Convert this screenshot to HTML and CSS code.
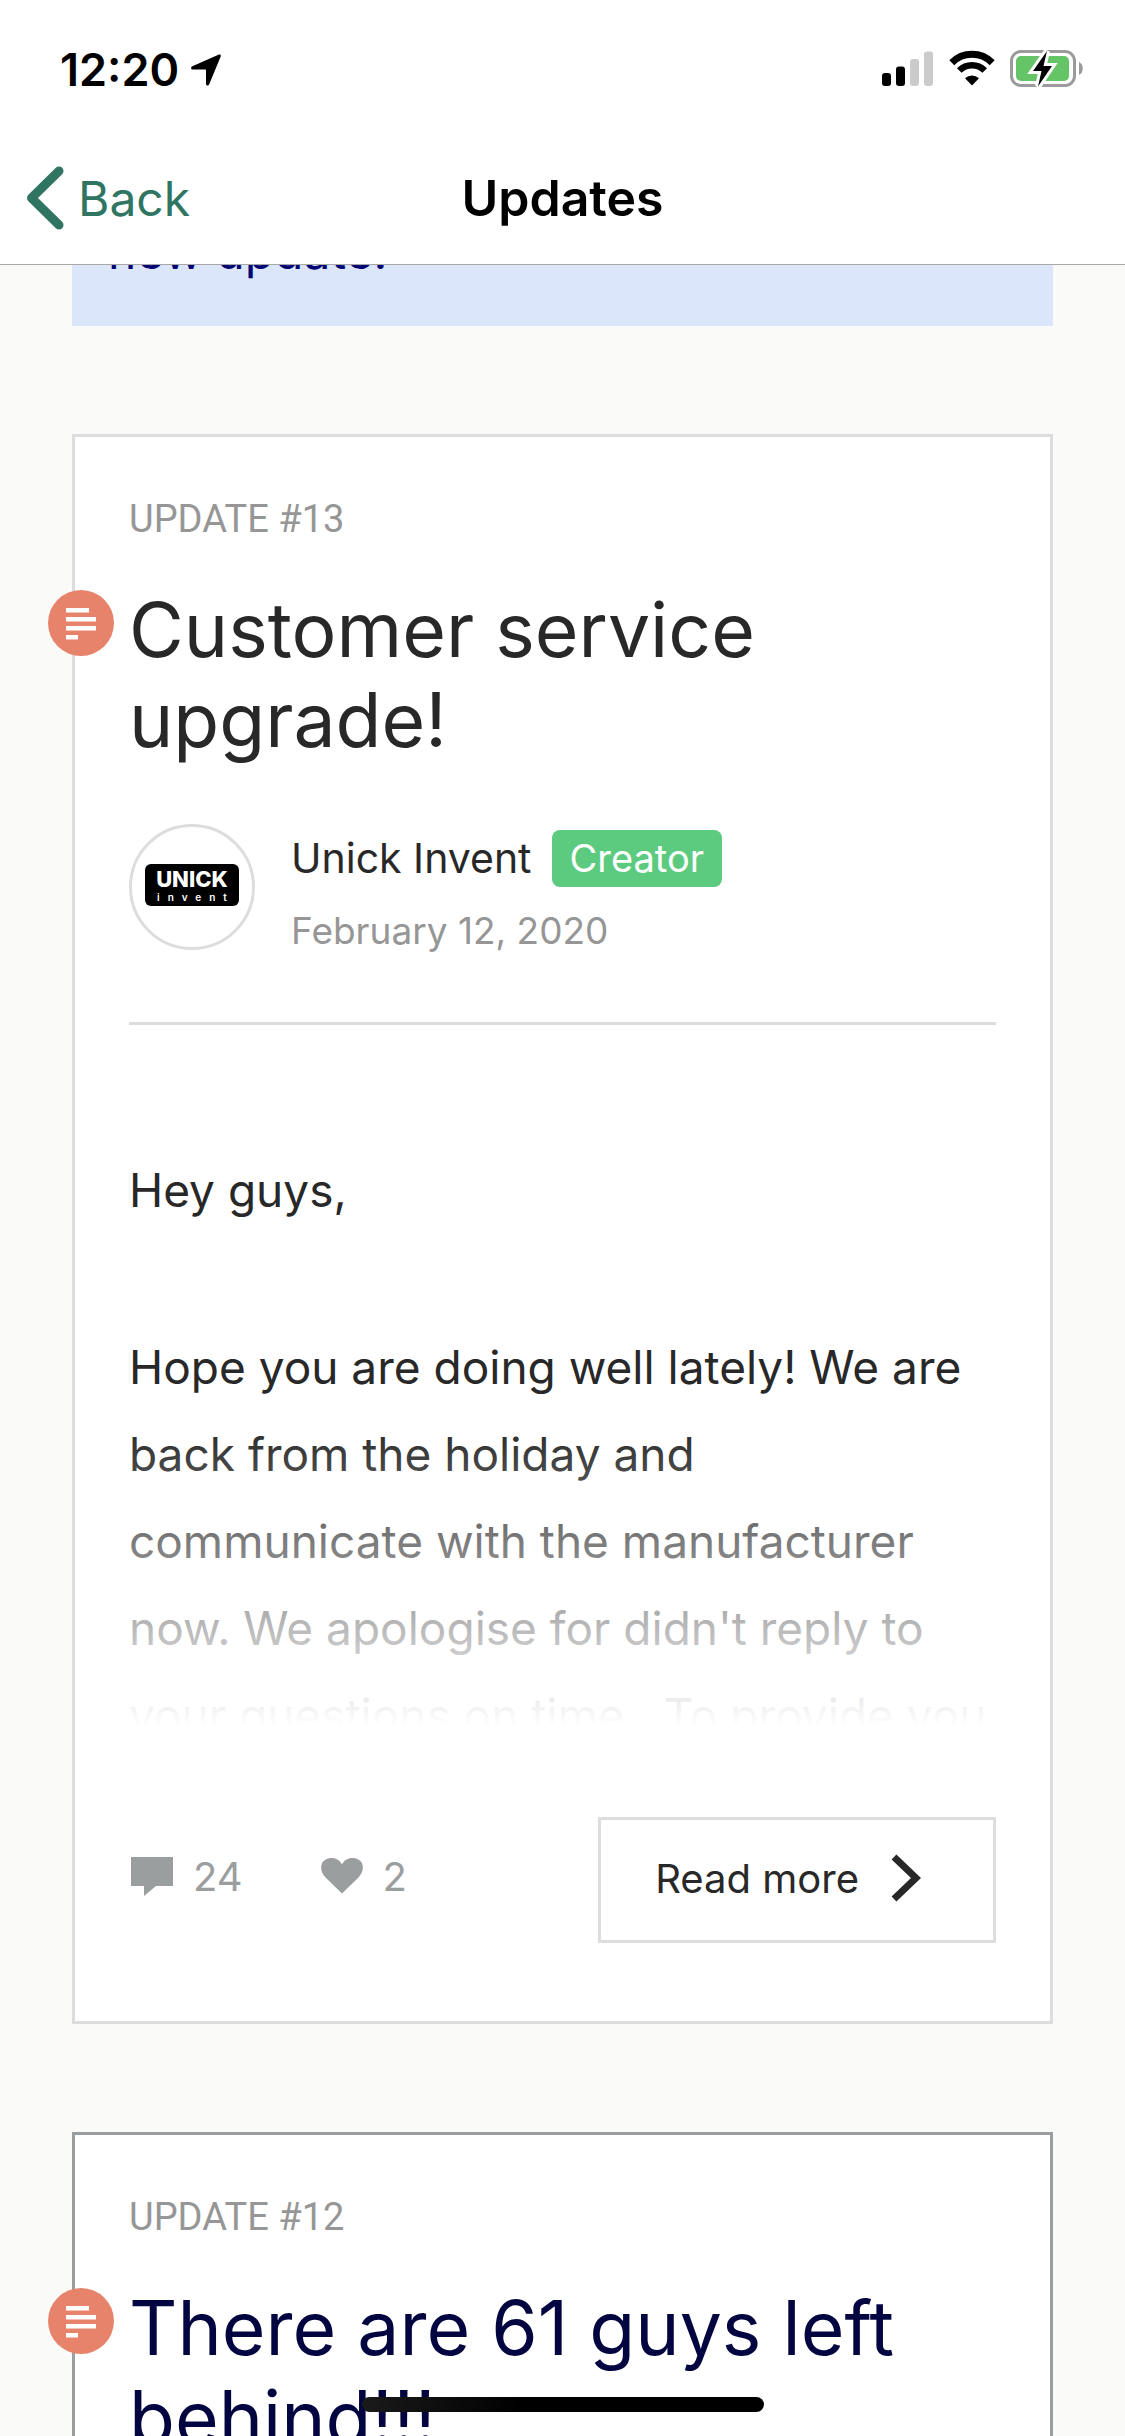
FILE: index.html
```html
<!DOCTYPE html>
<html lang="en">
<head>
    <meta charset="utf-8">
    <meta name="viewport" content="width=device-width, initial-scale=1.0">
    <title>Updates</title>
    <link rel="stylesheet" href="styles.css">
</head>
<body>
    <header class="top-bar">
        <div class="status-bar">
            <div class="status-left">
                <span class="time">12:20</span>
                <svg class="location" width="30" height="32" viewBox="0 0 30 32">
                    <path d="M28 0.5C29.4 0.2 30.2 1.2 29.7 2.5L18.2 30.2C17.4 32.2 15 31.8 15 29.7V16.6C15 16 14.7 15.6 14 15.6H2C-0.2 15.6 -0.6 13.1 1.4 12.2Z"/>
                </svg>
            </div>
            <div class="status-right">
                <svg width="52" height="35" viewBox="0 0 52 35">
                    <rect x="0" y="22" width="9" height="13" rx="3"/>
                    <rect x="14" y="15.500" width="9" height="19.500" rx="3"/>
                    <rect x="28" y="8" width="9" height="27" rx="3" fill="#cbcbcb"/>
                    <rect x="42" y="0.500" width="9" height="34.500" rx="3" fill="#cbcbcb"/>
                </svg>
                <svg width="46" height="36" viewBox="0 0 46 36">
                    <path d="M2.800 12.700A28.500 28.500 0 0 1 43.200 12.700" fill="none" stroke="#000" stroke-width="7"/>
                    <path d="M10.300 20.500A18 18 0 0 1 35.700 20.500" fill="none" stroke="#000" stroke-width="6.500"/>
                    <path d="M16 28.200A10.500 10.500 0 0 1 30 28.200L23 35.500Z"/>
                </svg>
                <svg width="73" height="37" viewBox="0 0 73 37">
                    <rect x="1.500" y="1.500" width="63" height="34" rx="9.500" fill="none" stroke="#9b9b9b" stroke-width="3"/>
                    <path d="M69 12C74 14 74 23 69 25Z" fill="#9b9b9b"/>
                    <rect x="6" y="6" width="53" height="25" rx="5" fill="#65c466"/>
                    <path d="M37 1L23 21H31.500L28 36.500L42 16H33.500Z" stroke="#fff" stroke-width="6"/>
                    <path d="M37 1L23 21H31.500L28 36.500L42 16H33.500Z"/>
                </svg>
            </div>
        </div>
        <nav class="nav-bar">
            <a class="back" href="#">
                <svg width="38" height="64" viewBox="0 0 38 64">
                    <path d="M33 5L5.500 32L33 59" fill="none" stroke="#2f7562" stroke-width="9" stroke-linecap="round" stroke-linejoin="round"/>
                </svg>
                Back
            </a>
            <h1>Updates</h1>
        </nav>
    </header>

    <main>
        <div class="notice">new update!</div>

        <article class="card">
            <span class="type-icon">
                <svg width="66" height="66" viewBox="0 0 66 66">
                    <path d="M18 18h23v4.500H18zM18 27h30v4.500H18zM18 36h30v4.500H18zM18 45h12v4.500H18z" fill="#fff"/>
                </svg>
            </span>
            <p class="label">UPDATE #13</p>
            <h2>Customer service upgrade!</h2>
            <div class="author">
                <div class="avatar">
                    <div class="logo">
                        <span class="logo-name">UNICK</span>
                        <span class="logo-sub">invent</span>
                    </div>
                </div>
                <div class="author-info">
                    <div class="author-name">Unick Invent <span class="creator">Creator</span></div>
                    <time datetime="2020-02-12">February 12, 2020</time>
                </div>
            </div>
            <div class="excerpt">
                <p>Hey guys,</p>
                <p>Hope you are doing well lately! We are back from the holiday and<br>communicate with the manufacturer now. We apologise for didn't reply to your questions on time.&nbsp; To provide you</p>
            </div>
            <footer class="card-footer">
                <span class="count">
                    <svg width="42" height="39" viewBox="0 0 42 39">
                        <path d="M0 0H42V29H25L13 39V29H0Z" fill="#9b9e9e"/>
                    </svg>
                    24
                </span>
                <span class="count">
                    <svg width="42" height="36" viewBox="0 0 42 36">
                        <path d="M21 35.500L4.500 19.500C-1.500 13 -1 5 4 2C10 -1.800 18 0 21 6.500C24 0 32 -1.800 38 2C43 5 43.500 13 37.500 19.500Z" fill="#9b9e9e"/>
                    </svg>
                    2
                </span>
                <button class="read-more" type="button">
                    Read more
                    <svg width="30" height="48" viewBox="0 0 30 48">
                        <path d="M3 3L25 24L3 45" fill="none" stroke="#282828" stroke-width="7"/>
                    </svg>
                </button>
            </footer>
        </article>

        <article class="card visited">
            <span class="type-icon">
                <svg width="66" height="66" viewBox="0 0 66 66">
                    <path d="M18 18h23v4.500H18zM18 27h30v4.500H18zM18 36h30v4.500H18zM18 45h12v4.500H18z" fill="#fff"/>
                </svg>
            </span>
            <p class="label">UPDATE #12</p>
            <h2>There are 61 guys left behind!!!</h2>
        </article>
    </main>

    <div class="home-indicator"></div>
</body>
</html>
```

FILE: styles.css
```css
* {
    box-sizing: border-box;
}

html, body {
    height: 100%;
    margin: 0;
    overflow: hidden;
}

body {
    background: #fafaf8;
    color: #282828;
    font-family: Inter, "Liberation Sans", sans-serif;
}

h1, h2, p {
    margin: 0;
    font-weight: 400;
}

svg {
    display: block;
    flex-shrink: 0;
}

/* Status bar and navigation */
.top-bar {
    position: fixed;
    top: 0;
    left: 0;
    right: 0;
    z-index: 2;
    padding-top: 40px;
    background: #fff;
    border-bottom: 1px solid #a8a8aa;
}

.status-bar {
    display: flex;
    justify-content: space-between;
    align-items: center;
    height: 60px;
    padding: 0 42px 0 60px;
    color: #000;
}

.status-left, .status-right {
    display: flex;
    align-items: center;
}

.status-left {
    gap: 12px;
}

.status-right {
    gap: 15px;
    padding-bottom: 4px;
}

.time {
    font-size: 45px;
    font-weight: 600;
    line-height: 60px;
}

.nav-bar {
    display: grid;
    grid-template-columns: 1fr auto 1fr;
    align-items: center;
    height: 164px;
    padding: 32px 26px 0;
}

.nav-bar h1 {
    color: #000;
    font-size: 50px;
    font-weight: 600;
    line-height: 60px;
}

.back {
    display: flex;
    align-items: center;
    gap: 14px;
    color: #2f7562;
    font-size: 48px;
    text-decoration: none;
}

/* Update list */
main {
    display: flex;
    flex-direction: column;
    gap: 108px;
    padding: 200px 72px 0;
}

.notice {
    height: 126px;
    padding: 16px 36px;
    background: #dce6fa;
    color: #020573;
    font-size: 48px;
    line-height: 72px;
}

.card {
    position: relative;
    padding: 58px 54px 78px;
    background: #fff;
    border: 3px solid #dcdddc;
}

.card.visited {
    border-color: #9b9e9e;
}

.card.visited h2 {
    color: #020540;
}

.type-icon {
    position: absolute;
    top: 153px;
    left: -27px;
    border-radius: 50%;
    background: #e8836b;
}

.label {
    color: #969696;
    font-family: Roboto, sans-serif;
    font-size: 38px;
    line-height: 48px;
}

h2 {
    margin-top: 42px;
    font-size: 75px;
    line-height: 90px;
}

.author {
    display: flex;
    gap: 36px;
    margin-top: 59px;
    padding-bottom: 67px;
    border-bottom: 3px solid #dcdddc;
}

.avatar {
    display: flex;
    justify-content: center;
    align-items: center;
    flex-shrink: 0;
    width: 126px;
    height: 126px;
    border: 3px solid #dcdddc;
    border-radius: 50%;
}

.logo {
    display: flex;
    flex-direction: column;
    align-items: center;
    width: 94px;
    height: 42px;
    margin-bottom: 4px;
    padding-top: 3px;
    border-radius: 6px;
    background: #000;
    color: #fff;
}

.logo-name {
    font-size: 22px;
    font-weight: 800;
    line-height: 24px;
}

.logo-sub {
    padding-left: 8px;
    font-size: 10px;
    font-weight: 600;
    letter-spacing: 8px;
    line-height: 12px;
}

.author-info {
    padding-top: 6px;
}

.author-name {
    display: flex;
    align-items: center;
    gap: 20px;
    font-size: 41px;
    line-height: 57px;
}

.creator {
    padding: 0 18px;
    border-radius: 8px;
    background: #5ccb80;
    color: #fff;
    font-size: 38px;
}

time {
    display: block;
    margin-top: 20px;
    color: #969696;
    font-size: 37px;
    line-height: 48px;
}

.excerpt {
    position: relative;
    height: 700px;
    padding-top: 122px;
    overflow: hidden;
    font-size: 46px;
    line-height: 87px;
}

.excerpt p + p {
    margin-top: 90px;
}

/* Fades the end of the excerpt out to the card */
.excerpt::after {
    content: "";
    position: absolute;
    right: 0;
    bottom: 0;
    left: 0;
    height: 300px;
    background: linear-gradient(rgba(255, 255, 255, 0), #fff);
}

.card-footer {
    display: flex;
    align-items: center;
    gap: 76px;
    margin-top: 92px;
}

.count {
    display: flex;
    align-items: center;
    gap: 20px;
    padding: 0 0 8px 2px;
    color: #9b9e9e;
    font-size: 40px;
}

.read-more {
    display: flex;
    align-items: center;
    gap: 32px;
    height: 126px;
    margin-left: auto;
    padding: 0 72px 4px 54px;
    border: 3px solid #dcdddc;
    background: #fff;
    color: #282828;
    font-family: inherit;
    font-size: 40px;
    cursor: pointer;
}

.home-indicator {
    position: fixed;
    bottom: 24px;
    left: 50%;
    z-index: 3;
    width: 402px;
    height: 15px;
    margin-left: -201px;
    border-radius: 8px;
    background: linear-gradient(to right, #1a1a1a, #000 40%);
}
```
